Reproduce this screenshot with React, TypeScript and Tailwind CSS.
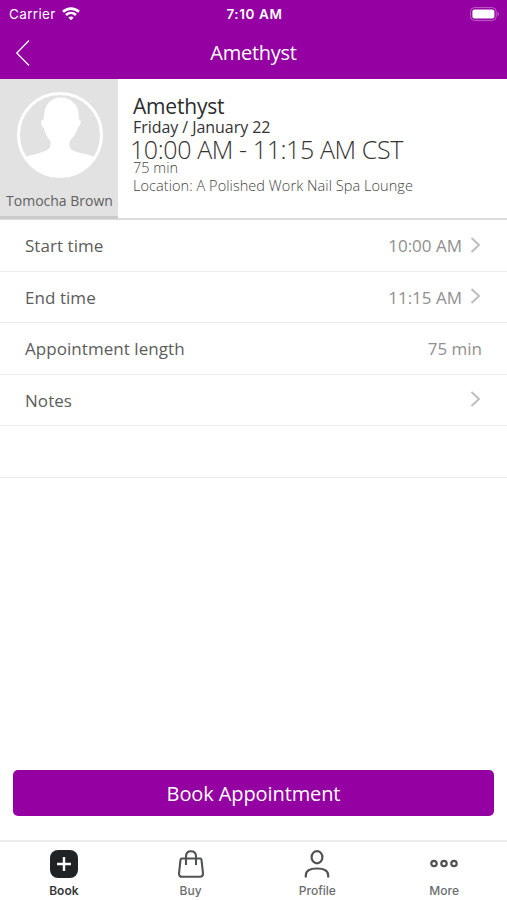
import React from "react";

const openSans = "font-['Open_Sans','Noto_Sans',sans-serif]";
const inter = "font-['Inter','Liberation_Sans',sans-serif]";

function Wifi() {
  return (
    <svg width="18" height="14" viewBox="0 0 18 14" fill="none" stroke="#fff" strokeWidth="2.7">
      <path d="M1 4.7C5.6.5 12.4.5 17 4.7" />
      <path d="M4 8C6.9 5.3 11.1 5.3 14 8" />
      <path d="M9 13.3 6.3 10.4C7.8 9.1 10.2 9.1 11.7 10.4Z" fill="#fff" stroke="none" />
    </svg>
  );
}

function Battery() {
  return (
    <svg width="30" height="14" viewBox="0 0 30 14" fill="none">
      <rect x="0.6" y="0.6" width="25.6" height="12.8" rx="3.8" stroke="#c05fca" strokeWidth="1" />
      <rect x="2.4" y="2.4" width="22" height="9.2" rx="2" fill="#fff" />
      <path d="M27.6 4.8C29.5 5.6 29.5 8.4 27.6 9.2Z" fill="#c05fca" />
    </svg>
  );
}

function Avatar() {
  return (
    <svg width="86" height="86" viewBox="0 0 86 86">
      <circle cx="43" cy="43" r="41.5" fill="#e2e2e2" stroke="#fff" strokeWidth="3" />
      <path
        fill="#fff"
        d="M44 5.5C53 5.5 61 12 61.5 21L61.8 27.5C65 27.5 64 34 60.5 36C59.5 42 55 46 52.5 49.5V54C53 59 60 60 66 61.5C72 63 76 64 78.5 65A42 42 0 0 1 8 65C11 63.5 16 63 21 61.5C27 59.5 33 58 33.5 53.5V49.5C31 46 28 42 27 36.5C23.5 34 23 28 26.5 27.5L27.5 20C29 11 35 5.5 44 5.5Z"
      />
    </svg>
  );
}

function Chevron() {
  return (
    <svg className="mr-[1px] ml-[8px] -mt-[2px]" width="11" height="16" viewBox="0 0 11 16" fill="none" stroke="#bdbdbd" strokeWidth="1.9">
      <path d="M1.5 1 9 8 1.5 15" />
    </svg>
  );
}

function Row({ label, value, arrow }: { label?: string; value?: string; arrow?: boolean }) {
  return (
    <div className="flex h-[51.5px] items-center justify-between border-b border-[#ececec] pl-[25px] pr-[25px] pt-[1px] text-[17px] text-[#5c5c5c]">
      <span className="tracking-[0.05px]">{label}</span>
      <div className="flex items-center text-[#909090]">
        <span>{value}</span>
        {arrow && <Chevron />}
      </div>
    </div>
  );
}

function Tab({ label, active, children }: { label: string; active?: boolean; children: React.ReactNode }) {
  return (
    <div className={`flex flex-1 flex-col items-center pl-[1px] pt-[7px] text-[12px] leading-[16px] ${inter} ${active ? "font-semibold text-[#36383a]" : "font-medium text-[#6a6d70]"}`}>
      <div className="flex h-[30px] items-center">{children}</div>
      <span className="mt-[4px]">{label}</span>
    </div>
  );
}

export default function App() {
  return (
    <div className={`flex h-[900px] w-[507px] flex-col overflow-hidden bg-white ${openSans}`}>
      <header className="h-[79px] shrink-0 bg-[#9400a2] text-white">
        <div className={`grid h-[28px] grid-cols-3 items-center pl-[9px] pr-[7px] text-[13px] ${inter}`}>
          <div className="flex items-center gap-[6px]">
            <span className="text-[13.5px] tracking-[0.35px]">Carrier</span>
            <Wifi />
          </div>
          <span className="text-center text-[13.5px] font-semibold tracking-[0.6px]">7:10 AM</span>
          <div className="flex justify-end"><Battery /></div>
        </div>
        <div className="grid h-[49px] grid-cols-[60px_1fr_60px] items-center">
          <svg className="ml-[15px]" width="16" height="28" viewBox="0 0 16 28" fill="none" stroke="#fff" strokeWidth="1.3">
            <path d="M14 1.5 1.8 14 14 26.5" />
          </svg>
          <h1 className="text-center text-[20px] tracking-[-0.25px]">Amethyst</h1>
        </div>
      </header>

      <section className="flex h-[140.5px] shrink-0 border-b-2 border-[#dcdcdc]">
        <div className="flex h-[140px] w-[118px] shrink-0 flex-col items-center border-b-[3px] border-[#cbcbcb] bg-[#e2e2e2] pl-[1px] pt-[13px]">
          <Avatar />
          <span className="mt-[13px] whitespace-nowrap text-[14px] leading-[20px] text-[#606060]">Tomocha Brown</span>
        </div>
        <div className="flex flex-col whitespace-nowrap pl-[15px] pt-[14px]">
          <span className="text-[21px] leading-[26px] tracking-[-0.2px] text-[#2d2d2d]">Amethyst</span>
          <span className="text-[16px] leading-[16px] tracking-[-0.05px] text-[#333]">Friday / January 22</span>
          <span className="-ml-[3px] text-[25px] font-light leading-[28px] tracking-[-0.4px] text-[#333]">10:00 AM - 11:15 AM CST</span>
          <span className="text-[14.5px] font-light leading-[10px] text-[#444]">75 min</span>
          <span className="mt-[3px] text-[14.5px] font-light leading-[20px] tracking-[0.06px] text-[#444]">Location: A Polished Work Nail Spa Lounge</span>
        </div>
      </section>

      <main className="flex-1 pt-[0.5px]">
        <Row label="Start time" value="10:00 AM" arrow />
        <Row label="End time" value="11:15 AM" arrow />
        <Row label="Appointment length" value="75 min" />
        <Row label="Notes" arrow />
        <Row />
      </main>

      <div className="shrink-0 px-[13px] pb-[24px]">
        <button className="block h-[46px] w-full rounded-[5px] bg-[#9400a2] pt-[2px] text-[20px] tracking-[-0.1px] text-white">Book Appointment</button>
      </div>

      <nav className="flex h-[60px] shrink-0 border-t-2 border-[#ececec]">
        <Tab label="Book" active>
          <svg width="28" height="28" viewBox="0 0 28 28" fill="none">
            <rect width="28" height="28" rx="8" fill="#202326" />
            <path d="M14 7V21M7 14H21" stroke="#fff" strokeWidth="2.4" />
          </svg>
        </Tab>
        <Tab label="Buy">
          <svg width="28" height="28" viewBox="0 0 28 28" fill="none" stroke="#505356" strokeWidth="2.1" strokeLinejoin="round">
            <path d="M4.7 8.5H23.3Q24.3 8.5 24.5 9.8L26 23.5Q26 26.8 23 26.8H5Q2 26.8 2 23.5L3.5 9.8Q3.7 8.5 4.7 8.5Z" />
            <path d="M9 15V6Q9.3 1.2 14 1.2T19 6V15" />
          </svg>
        </Tab>
        <Tab label="Profile">
          <svg width="28" height="28" viewBox="0 0 28 28" fill="none" stroke="#505356" strokeWidth="2.2">
            <ellipse cx="14" cy="7.2" rx="5.4" ry="6.1" />
            <path d="M2.8 27.5V25.5Q2.8 18.5 14 18.5T25.2 25.5V27.5" />
          </svg>
        </Tab>
        <Tab label="More">
          <svg width="28" height="28" viewBox="0 0 28 28" fill="none" stroke="#505356" strokeWidth="2.2">
            <circle cx="4" cy="13.5" r="2.7" />
            <circle cx="14" cy="13.5" r="2.7" />
            <circle cx="24" cy="13.5" r="2.7" />
          </svg>
        </Tab>
      </nav>
    </div>
  );
}
